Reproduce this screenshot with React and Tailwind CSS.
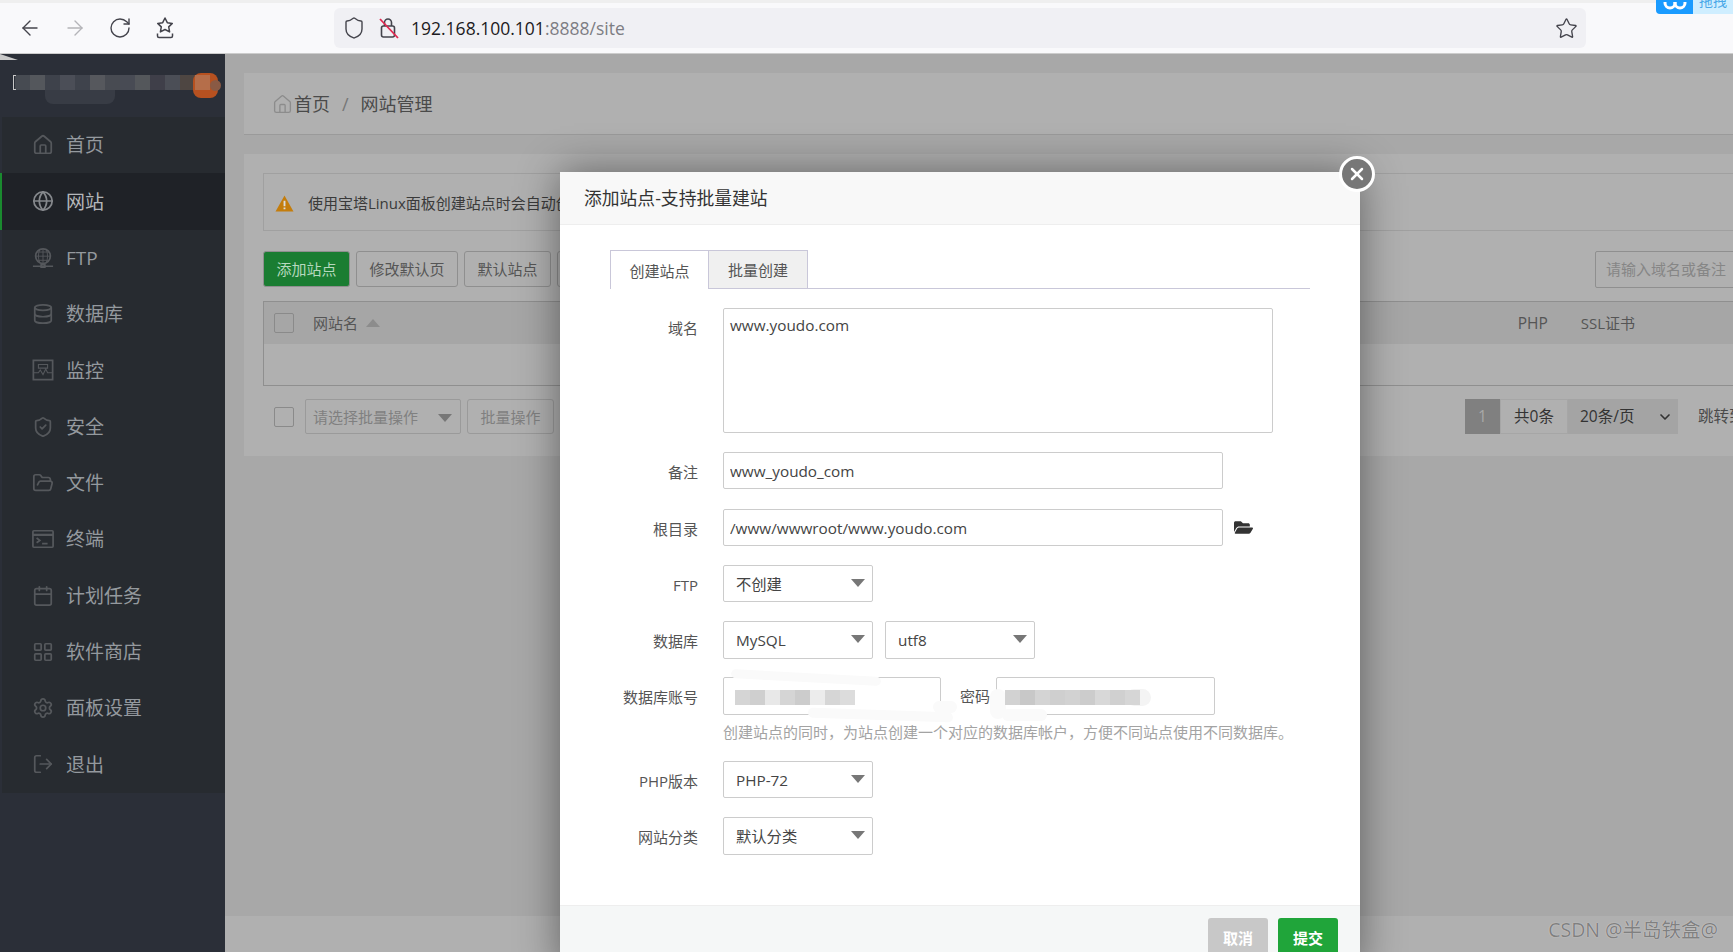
import { ArrowLeft, ArrowRight, RotateCw, Star, Shield, House, Globe, Database, ShieldCheck, FolderOpen, Calendar, LayoutGrid, Settings, LogOut, X, ChevronDown } from 'lucide-react';
import { FaFolderOpen } from 'react-icons/fa';

const FtpIcon = props => (
  <svg viewBox="0 0 24 24" fill="none" stroke="currentColor" strokeWidth="1.5" {...props}>
    <circle cx="12" cy="10" r="8" />
    <path d="M4 10h16M12 2v16M6 5.500h12M6 14.500h12M8.500 3c-2 4-2 10 0 14M15.500 3c2 4 2 10 0 14" strokeWidth="1" />
    <path d="M1 21h22M10 19h4v3h-4z" />
  </svg>
);

const MonitorIcon = props => (
  <svg viewBox="0 0 24 24" fill="none" stroke="currentColor" strokeWidth="1.8" {...props}>
    <rect x="1.500" y="1.500" width="21" height="21" />
    <path d="M2 15h5l2-3 3 5 3-6 2 4h5M7 6h10v4H7z" strokeWidth="1.200" />
  </svg>
);

const TerminalIcon = props => (
  <svg viewBox="0 0 24 24" fill="none" stroke="currentColor" strokeWidth="1.8" {...props}>
    <rect x="1" y="3" width="22" height="18" rx="1" />
    <path d="M1 7.500h22" strokeWidth="2.500" />
    <path d="m5 11 3.500 2.500L5 16M11 17h6" />
  </svg>
);

const LockOff = props => (
  <svg viewBox="0 0 24 24" fill="none" {...props}>
    <rect x="4.500" y="10" width="13" height="11" rx="2" stroke="#44444c" strokeWidth="1.600" />
    <path d="M7.500 10V6.500a3.500 3.500 0 0 1 7 0V10" stroke="#44444c" strokeWidth="1.600" />
    <path d="M3 3l18 19" stroke="#e22850" strokeWidth="1.800" />
  </svg>
);

const StarTray = props => (
  <svg viewBox="0 0 24 24" fill="none" stroke="currentColor" strokeWidth="1.500" strokeLinejoin="round" {...props}>
    <path d="m12 2 2.300 4.700 5 .7-3.600 3.500.9 5-4.600-2.400-4.600 2.400.9-5L4.700 7.400l5-.7z" />
    <path d="M4.500 17.500V20a1.500 1.500 0 0 0 1.500 1.500h12a1.500 1.500 0 0 0 1.500-1.500v-2.500" />
  </svg>
);

const WarnIcon = props => (
  <svg viewBox="0 0 20 18" {...props}>
    <path d="M10 0.500 19.500 17.500H0.500z" fill="#c47d0c" />
    <path d="M9 6h2v6H9zM9 13.200h2v2H9z" fill="#dcdcdc" />
  </svg>
);

const menu = [
  { name: '首页', icon: House },
  { name: '网站', icon: Globe, active: true },
  { name: 'FTP', icon: FtpIcon },
  { name: '数据库', icon: Database },
  { name: '监控', icon: MonitorIcon },
  { name: '安全', icon: ShieldCheck },
  { name: '文件', icon: FolderOpen },
  { name: '终端', icon: TerminalIcon },
  { name: '计划任务', icon: Calendar },
  { name: '软件商店', icon: LayoutGrid },
  { name: '面板设置', icon: Settings },
  { name: '退出', icon: LogOut },
];

const logoBlocks = ['#474b52', '#54575c', '#3e424b', '#4b4e57', '#3f434c', '#56585d', '#484b52', '#484b54', '#54575b', '#3f3f49', '#4b4e56', '#4e4642'];
const userBlocks = ['#d5d5d5', '#cfcfcf', '#e8e8e8', '#d5d5d5', '#cccccc', '#ececec', '#d6d6d6', '#dcdcdc'];
const passBlocks = ['#d2d2d2', '#c8c8c8', '#d4d4d4', '#cfcfcf', '#d2d2d2', '#cccccc', '#d8d8d8', '#d0d0d0', '#d6d6d6'];

const PageButton = ({ children, className = '' }) => (
  <button type="button" className={`h-full shrink-0 rounded-[3px] border border-[#8f8f8f] text-[15px] text-[#555] ${className}`}>
    {children}
  </button>
);

const Check = () => <span className="block size-5 shrink-0 rounded-[2px] border border-[#8a8a8a]" />;

const Select = ({ value, className = 'w-[150px]', height = 'h-[37px]' }) => (
  <div className={`relative flex items-center rounded-[2px] border border-[#ccc] bg-white pl-[12px] pt-px text-[15.300px] text-[#444] ${height} ${className}`}>
    {value}
    <span className="absolute right-[7px] top-[13px] border-x-[7px] border-t-[8px] border-x-transparent border-t-[#777]" />
  </div>
);

const Row = ({ label, className = 'mt-[19px]', top = false, children }) => (
  <div className={`flex ${top ? 'items-start' : 'items-center'} ${className}`}>
    <label className={`w-[88px] shrink-0 whitespace-nowrap text-right text-[15px] text-[#555] ${top ? 'pt-[9px]' : 'pt-[3px]'}`}>{label}</label>
    <div className="ml-[25px] flex items-center">{children}</div>
  </div>
);

const Field = ({ value, className = 'w-[500px]', height = 'h-[37px]' }) => (
  <input
    readOnly
    defaultValue={value}
    className={`rounded-[2px] border border-[#ccc] px-[6px] text-[15.300px] text-[#444] outline-none ${height} ${className}`}
  />
);

const Smudge = ({ colors, className }) => (
  <div className={`absolute flex h-[15px] ${className}`}>
    {colors.map((c, i) => (
      <span key={i} className="h-full w-[15px]" style={{ background: c }} />
    ))}
  </div>
);

const App = () => {
  return (
    <div className="relative flex h-screen w-full flex-col overflow-hidden bg-[#a8a8a8] font-['Open_Sans','Noto_Sans_CJK_SC',sans-serif]">
      {/* browser toolbar */}
      <div className="h-[54px] shrink-0 border-b border-[#ccc] bg-[#f9f9fb]">
        <div className="h-[3px] bg-[#efefef]" />
        <div className="flex h-[50px] items-center pl-[18px]">
          <div className="flex items-center gap-[21px] text-[#44444c]">
            <ArrowLeft size={24} strokeWidth={1.4} />
            <ArrowRight size={24} strokeWidth={1.4} className="text-[#b4b4b8]" />
            <RotateCw size={24} strokeWidth={1.4} />
            <StarTray className="size-[24px]" />
          </div>
          <div className="ml-[157px] flex h-[40px] w-[1252px] items-center rounded-[6px] bg-[#f0f0f4] pl-[8px] pr-[8px]">
            <Shield size={24} strokeWidth={1.4} className="text-[#44444c]" />
            <LockOff className="ml-[11px] size-[24px]" />
            <span className="ml-[10px] text-[17.500px] text-[#1c1b22]">
              192.168.100.101<span className="text-[#7d7d83]">:8888/site</span>
            </span>
            <Star size={23} strokeWidth={1.4} className="ml-auto text-[#44444c]" />
          </div>
        </div>
      </div>

      <div className="flex min-h-0 flex-1">
        {/* sidebar */}
        <aside className="relative flex w-[225px] shrink-0 flex-col bg-[#2b2f38]">
          <div className="relative flex h-[63px] shrink-0 items-start pl-[15px] pt-[21px]">
            <span className="absolute left-[45px] top-[35px] h-[15px] w-[70px] rounded-b-[8px] bg-[#383c45]" />
            <div className="relative flex h-[15px]">
              {logoBlocks.map((c, i) => (
                <span key={i} className="h-full w-[15px]" style={{ background: c }} />
              ))}
            </div>
            <span className="absolute left-0 top-0 h-[6px] w-[18px] bg-[#c9c9c9] [clip-path:polygon(0_0,100%_100%,0_100%)]" />
            <span className="absolute left-[13px] top-[21px] h-[15px] w-[3px] border-y border-l border-[#c8c8c8]" />
            <span className="absolute left-[193px] top-[19px] h-[25px] w-[25px] rounded-[8px] bg-[#b75120]" />
            <span className="absolute left-[195px] top-[21px] h-[15px] w-[15px] bg-[#b56e4a]" />
            <span className="absolute left-[210px] top-[26px] h-[11px] w-[11px] rounded-full bg-[#8a5a44]" />
          </div>
          <nav className="ml-[2px] bg-[#272b30]">
            {menu.map(item => {
              const Icon = item.icon;
              return (
                <div
                  key={item.name}
                  className={`flex h-[56.3px] items-center pl-[30px] ${item.active ? 'relative bg-[#1f2227] text-[#b4b7ba]' : 'text-[#94999e]'}`}
                >
                  {item.active && <span className="absolute -left-[2px] top-0 h-full w-[2px] bg-[#1a8a2f]" />}
                  <Icon className={`size-[22px] shrink-0 ${item.active ? 'text-[#85888c]' : 'text-[#55585c]'}`} strokeWidth={1.9} />
                  <span className="ml-[12px] pt-px text-[19px]">{item.name}</span>
                </div>
              );
            })}
          </nav>
        </aside>

        {/* page behind the dialog */}
        <main className="flex min-w-0 flex-1 flex-col overflow-hidden pl-[19px] pt-[19px]">
          <div className="flex h-[62px] w-[1530px] shrink-0 items-center border-b border-[#9a9a9a] bg-[#b0b0b0] pb-px pl-[28px] pt-[2px] text-[18px] text-[#4a4a4a]">
            <House size={21} strokeWidth={1.5} className="text-[#8c8c8c]" />
            <span className="ml-[1px]">首页</span>
            <span className="mx-[12px] text-[#777]">/</span>
            <span>网站管理</span>
          </div>

          <div className="mt-[19px] h-[302px] w-[1530px] shrink-0 bg-[#b0b0b0] px-[19px] pt-[19px]">
            <div className="flex h-[58px] w-[1500px] items-center border border-[#a0a0a0] pl-[11px] pt-[2px]">
              <WarnIcon className="h-[17px] w-[19px]" />
              <span className="ml-[14px] w-[252px] overflow-hidden whitespace-nowrap text-[15px] text-[#3a3a3a]">使用宝塔Linux面板创建站点时会自动创建</span>
            </div>

            <div className="mt-[20px] flex h-[36px] w-[1500px] items-center gap-[6px]">
              <PageButton className="w-[87px] border-[#1a7d32] bg-[#1a7d32] text-[#b6d8be]">添加站点</PageButton>
              <PageButton className="w-[102px]">修改默认页</PageButton>
              <PageButton className="w-[87px]">默认站点</PageButton>
              <PageButton className="w-[40px]" />
              <div className="ml-auto flex h-[37px] w-[168px] items-center rounded-[2px] border border-[#8f8f8f] pl-[10px] text-[15px] text-[#868686]">
                请输入域名或备注
              </div>
            </div>

            <div className="mt-[14px] w-[1500px] border-y border-l border-[#8f8f8f]">
              <div className="flex h-[42px] items-center bg-[#a6a6a6] pl-[10px] text-[15px] text-[#555]">
                <Check />
                <span className="ml-[19px]">网站名</span>
                <span className="ml-[8px] border-x-[7px] border-b-[8px] border-x-transparent border-b-[#8c8c8c]" />
                <div className="ml-auto flex gap-[33px] pr-[128px] pt-px">
                  <span className="text-[15.500px]">PHP</span>
                  <span>SSL证书</span>
                </div>
              </div>
              <div className="h-[41px]" />
            </div>

            <div className="mt-[13px] flex h-[35px] w-[1500px] items-center pl-[11px]">
              <Check />
              <div className="relative ml-[11px] flex h-full w-[156px] items-center rounded-[2px] border border-[#9a9a9a] pl-[7px] pt-px text-[15px] text-[#808080]">
                请选择批量操作
                <span className="absolute right-[8px] top-[14px] border-x-[7px] border-t-[8px] border-x-transparent border-t-[#777]" />
              </div>
              <PageButton className="ml-[6px] w-[87px] border-[#9a9a9a] pt-px text-[#808080]">批量操作</PageButton>
              <div className="ml-auto flex h-full items-center text-[15.500px] text-[#333]">
                <span className="flex h-full w-[35px] items-center justify-center bg-[#808080] text-[#a8a8a8]">1</span>
                <span className="flex h-full w-[68px] items-center justify-center border border-[#a6a6a6] pt-px">共0条</span>
                <span className="flex h-full w-[110px] items-center bg-[#a4a4a4] pl-[12px] pt-px">
                  20条/页
                  <ChevronDown size={16} strokeWidth={2.5} className="ml-auto mr-[5px]" />
                </span>
                <span className="ml-[20px] w-[65px] shrink-0 whitespace-nowrap pt-px text-[#4a4a4a]">跳转到</span>
              </div>
            </div>
          </div>

          <div className="flex-1" />
          <div className="-ml-[19px] h-[36px] shrink-0 bg-[#b0b0b0]" />
        </main>
      </div>

      {/* floating widget clipped by the top edge */}
      <div className="absolute right-0 top-0 flex h-[14px] w-[77px] overflow-hidden rounded-bl-[4px]">
        <div className="flex w-[37px] items-end justify-center bg-[#1a9bff]">
          <svg viewBox="0 0 24 10" className="mb-[2px] h-[10px] w-[24px]" fill="none" stroke="#fff" strokeWidth="3">
            <circle cx="7" cy="1" r="5" />
            <circle cx="17" cy="1" r="5" />
          </svg>
        </div>
        <div className="flex flex-1 items-end justify-center bg-[#cfeeff] pb-[7px] text-[14px] leading-[12px] text-[#4aa8e8]">拖拽</div>
      </div>

      {/* dialog */}
      <div className="absolute left-[560px] top-[172px] flex h-[800px] w-[800px] flex-col bg-white shadow-[0_0_40px_rgba(0,0,0,0.45)]">
        <div className="flex h-[53px] shrink-0 items-center border-b border-[#eee] bg-[#f8f8f8] pl-[24px] text-[17.800px] text-[#333]">
          添加站点-支持批量建站
        </div>
        <button type="button" className="absolute -right-[15px] -top-[16px] flex size-[36px] items-center justify-center rounded-full border-[3px] border-white bg-[#777] text-white">
          <X size={20} strokeWidth={3} />
        </button>

        <div className="flex-1 pl-[50px] pt-[25px]">
          <div className="flex h-[39px] w-[700px] items-end border-b border-[#c9c7d9] text-[15px] text-[#555]">
            <div className="-mb-px flex h-[39px] w-[98px] items-center justify-center border-l border-t border-[#c9c7d9] bg-white pt-[2px]">创建站点</div>
            <div className="-mb-px flex h-[39px] w-[100px] items-center justify-center border border-[#c9c7d9] bg-[#f0f0f0] pt-[2px]">批量创建</div>
          </div>

          <Row label="域名" top>
            <textarea
              readOnly
              defaultValue="www.youdo.com"
              className="h-[125px] w-[550px] resize-none rounded-[2px] border border-[#ccc] px-[6px] py-[5px] text-[15.300px] text-[#444] outline-none"
            />
          </Row>
          <Row label="备注">
            <Field value="www_youdo_com" />
          </Row>
          <Row label="根目录" className="mt-[20px]">
            <Field value="/www/wwwroot/www.youdo.com" />
            <FaFolderOpen size={19} className="ml-[11px] text-[#333]" />
          </Row>
          <Row label="FTP">
            <Select value="不创建" />
          </Row>
          <Row label="数据库" className="mt-[19px]">
            <Select value="MySQL" height="h-[38px]" />
            <Select value="utf8" height="h-[38px]" className="ml-[12px] w-[150px]" />
          </Row>
          <Row label="数据库账号" className="mt-[18px]">
            <div className="relative">
              <Field value="" className="w-[218px]" height="h-[38px]" />
              <span className="absolute left-[8px] -top-[4px] h-[9px] w-[150px] rotate-[3deg] rounded-full bg-[#fafafa]" />
              <span className="absolute left-[85px] -bottom-[5px] h-[10px] w-[145px] rotate-[2deg] rounded-full bg-[#fafafa]" />
              <span className="absolute -right-[16px] bottom-[2px] h-[12px] w-[24px] rounded-full bg-[#fafafa]" />
              <Smudge colors={userBlocks} className="left-[12px] top-[13px]" />
            </div>
            <span className="ml-[19px] text-[15px] text-[#555]">密码</span>
            <div className="relative ml-[6px]">
              <Field value="" className="w-[219px]" height="h-[38px]" />
              <span className="absolute -left-[6px] top-[12px] h-[30px] w-[16px] rounded-full bg-[#fafafa]" />
              <span className="absolute left-[6px] -bottom-[6px] h-[12px] w-[45px] rounded-full bg-[#fafafa]" />
              <span className="absolute left-[130px] top-[12px] h-[17px] w-[25px] rounded-full bg-[#f4f4f4]" />
              <Smudge colors={passBlocks} className="left-[9px] top-[13px]" />
            </div>
          </Row>
          <p className="ml-[113px] mt-[7px] whitespace-nowrap text-[15px] leading-[20px] text-[#a3a3a3]">
            创建站点的同时，为站点创建一个对应的数据库帐户，方便不同站点使用不同数据库。
          </p>
          <Row label="PHP版本" className="mt-[19px]">
            <Select value="PHP-72" />
          </Row>
          <Row label="网站分类">
            <Select value="默认分类" height="h-[38px]" />
          </Row>
        </div>

        <div className="absolute left-0 top-[733px] flex h-[67px] w-full justify-end gap-[10px] border-t border-[#eee] bg-[#f5f7f7] pr-[22px] pt-[12px]">
          <button type="button" className="h-[40px] w-[60px] rounded-[3px] bg-[#c8c8c8] text-[15px] font-bold text-white">取消</button>
          <button type="button" className="h-[40px] w-[60px] rounded-[3px] bg-[#20a53a] text-[15px] font-bold text-white">提交</button>
        </div>
      </div>

      <span className="absolute bottom-[8px] right-[15px] text-[19.500px] text-[#808080] [text-shadow:0_0_1px_#e8e8e8]">CSDN @半岛铁盒@</span>
    </div>
  );
};

export default App;
